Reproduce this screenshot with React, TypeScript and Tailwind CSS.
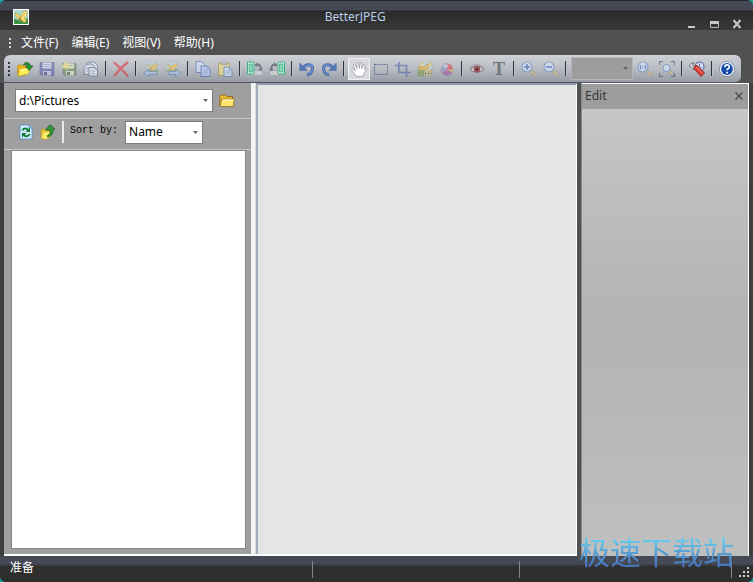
import { useState } from 'react';
import type { ReactNode } from 'react';

const MENUS = ['文件(F)', '编辑(E)', '视图(V)', '帮助(H)'];

interface IconProps {
  children: ReactNode;
  faded?: boolean;
}

function Icon({ children, faded }: IconProps) {
  return (
    <svg
      viewBox="0 0 16 16"
      className={`h-4 w-4 ${faded ? 'opacity-60' : ''}`}
      fill="none"
      aria-hidden="true"
    >
      {children}
    </svg>
  );
}

function OpenIcon() {
  return (
    <Icon>
      <path d="M.5 5l1-1h4l1 1h4v8l-8 2-2-1z" fill="#e4b41c" stroke="#a57b10" strokeWidth=".5" />
      <path d="M.8 15L3 7.500l11-1L11 13z" fill="#ffee58" stroke="#c9a020" strokeWidth=".6" />
      <path d="M3.500 9l9-1" stroke="#fffbb0" />
      <path d="M6.500 4C7 .5 13 .5 13.500 5H16l-4 4.500L8.500 5H11c-.5-1.800-2.500-2-4.500-1z" fill="#249a2d" stroke="#12551a" strokeWidth=".6" />
    </Icon>
  );
}

function SaveIcon() {
  return (
    <Icon faded>
      <path d="M1 1.500h14v13H2.500L1 13z" fill="#5f62ae" stroke="#4a4c91" strokeWidth=".7" />
      <path d="M3.500 1.500h9v6h-9z" fill="#e3e6f6" />
      <path d="M4.500 3.500h7M4.500 5.500h7" stroke="#9ba2cf" />
      <path d="M4 10h8v4.500H4z" fill="#c9cce3" />
      <path d="M5 11h3v3H5z" fill="#43457f" />
    </Icon>
  );
}

function SaveAsIcon() {
  return (
    <Icon faded>
      <path d="M2 2.500h13v12H3.500L2 13z" fill="#6e8f58" stroke="#557248" strokeWidth=".7" />
      <path d="M5 2.500h8v5H5z" fill="#e6edcf" />
      <path d="M7 4.500h5" stroke="#a5b28f" />
      <path d="M5 10h8v4.500H5z" fill="#dce4d8" />
      <path d="M6 11h3v3H6z" fill="#52654c" />
      <path d="M0 4.500l3-1L3.500.5l2 2 3-1.500L7.500 4l2 2-3 .5L5.500 9.500 4 7 1 8l1-2z" fill="#f5e87a" />
    </Icon>
  );
}

function BatchIcon() {
  return (
    <Icon faded>
      <path d="M3.500 3L5.500 1H11l3.500 3.500V12" fill="#edf1fc" stroke="#5a6c98" />
      <path d="M1 6.500L4 3h5l3 3v7.500H1z" fill="#e4eafa" stroke="#5a6c98" />
      <path d="M6 6.500h5l3.500 3v5.500H6z" fill="#f2f5ff" stroke="#5a6c98" />
      <path d="M8 10h4M8 12.500h4M3 7.500h2M3 10h2" stroke="#7f8eb3" strokeWidth=".8" />
    </Icon>
  );
}

function DeleteIcon() {
  return (
    <Icon faded>
      <path d="M1.500 1.800C6 5.500 10.500 10 14.500 14.800M14.500 1.500C9 5.500 5 10 1.500 14.500" stroke="#e63238" strokeWidth="2.200" strokeLinecap="round" />
    </Icon>
  );
}

function PhotoIcon({ forward }: { forward?: boolean }) {
  return (
    <Icon faded>
      <g transform={forward ? 'translate(-2 0)' : undefined}>
        <path d="M3 1h12v10H3z" fill="#bcdbe8" stroke="#9fb0b4" strokeWidth=".5" />
        <path d="M3 11V8.500l4-1 3 1 5-1.500v4z" fill="#8cb07c" />
        <path
          d="M9 7.500C6.500 7 4.500 5.500 4.500 3.500 7 3.500 8.500 5 9 6c.5-2 2.500-3.500 5-3.500.5 2.500-.5 4-2.500 4.800l1 2-2 .7-1.300-1.500L6.500 10 5 8.500z"
          fill="#f2cb50"
          stroke="#a07c34"
          strokeWidth=".5"
        />
      </g>
      {forward ? (
        <path d="M4 10.500h6.500V8.200L16 12l-5.500 3.800v-2.300H4z" fill="#a9c4f0" stroke="#4a72ad" strokeWidth=".8" />
      ) : (
        <path d="M14 10.500H6V8.200L.5 12 6 15.800v-2.300h8z" fill="#a9c4f0" stroke="#4a72ad" strokeWidth=".8" />
      )}
    </Icon>
  );
}

function CopyIcon() {
  return (
    <Icon faded>
      <path d="M1 .5h5.500l3 3v8H1z" fill="#d9e7ff" stroke="#4d72b7" />
      <path d="M6 5h6l3 3v7.500H6z" fill="#bdd2ff" stroke="#3f66b2" />
      <path d="M12 5v3h3M8 9h5M8 11h5M8 13h4" stroke="#6c8fcf" strokeWidth=".7" />
    </Icon>
  );
}

function PasteIcon() {
  return (
    <Icon faded>
      <path d="M1.500 2h11v12.500h-11z" fill="#f3e27c" stroke="#a8903c" />
      <path d="M4 3.500V2h2L7 .5l1 1.500h2v1.500z" fill="#c8cbd3" stroke="#777f92" strokeWidth=".7" />
      <path d="M7 6h5l3 3v6.500H7z" fill="#d9e5ff" stroke="#4e71b1" strokeWidth=".9" />
      <path d="M12 6v3h3M9 10h4M9 12h4" stroke="#6988bf" strokeWidth=".7" />
    </Icon>
  );
}

function RotateIcon({ flip }: { flip?: boolean }) {
  return (
    <Icon>
      <g transform={flip ? 'translate(16 0) scale(-1 1)' : undefined}>
        <path d="M5.500 9.500h10v5h-10z" fill="#c9ccd1" stroke="#a2a7af" />
        <path d="M.5 1h6.500v12H.5z" fill="#d7f6e7" stroke="#3fae80" />
        <path d="M2 3h3.500v8H2z" fill="#84d8b8" stroke="#39976f" strokeWidth=".6" />
        <path d="M8.500 4.200c3.500-1.700 5.300.3 5.300 4" stroke="#737a87" strokeWidth="2" />
        <path d="M11.300 7.500H16l-2.200 3zM7.500 4.500l3-3.500v5z" fill="#737a87" />
      </g>
    </Icon>
  );
}

function UndoIcon({ flip }: { flip?: boolean }) {
  return (
    <Icon>
      <g transform={flip ? 'translate(16 0) scale(-1 1)' : undefined}>
        <path d="M4 7C7 2.500 13.500 2.500 13.500 7.500c0 3.500-2 5.500-5.500 6.500" stroke="#4569a6" strokeWidth="3" />
        <path d="M4.500 6.500C8 3 13.500 3 13.500 7.500c0 3-2 5-5 6" stroke="#6e93cf" strokeWidth="1.300" />
        <path d="M.7 2V9.500h7.500z" fill="#5379b8" stroke="#4569a6" strokeWidth=".5" />
      </g>
    </Icon>
  );
}

function HandIcon() {
  return (
    <Icon>
      <path
        d="M5.200 15.300C3.500 13 2 10.500.8 9.300c-.7-1 .8-1.900 1.700-1.100L4.300 10 2.500 4c-.3-1.300 1.200-1.700 1.700-.4L6 7.500 5.700 2c0-1.300 1.600-1.300 1.800 0l.8 5.300L9.200 2c.2-1.200 1.900-1 1.800.3l-.4 5.400L12.400 4c.5-1.200 1.900-.6 1.600.6l-.4 3.600 1.200-.7c1-.3 1.300.6.6 1.300l-2.200 3-1.300 3.500z"
        fill="#fff"
        stroke="#8a8e97"
        strokeWidth=".7"
      />
    </Icon>
  );
}

function SelectionIcon() {
  return (
    <Icon>
      <path d="M1.500 3.500h13v10h-13z" stroke="#5b7099" strokeDasharray="2 1" />
    </Icon>
  );
}

function CropIcon() {
  return (
    <Icon faded>
      <path d="M4 1v10.500h12M0 4.500h11.500V16" stroke="#4d66a8" strokeWidth="1.700" />
      <path d="M4.500 11L14 1.500" stroke="#8b9ec8" strokeWidth=".7" />
    </Icon>
  );
}

function EffectsIcon() {
  return (
    <Icon faded>
      <path d="M5 1h10v14H1V6z" fill="#e9dfa0" stroke="#b0a26a" strokeWidth=".6" />
      <path d="M7 1.500h7.500V8H7z" fill="#b7d6e6" />
      <path d="M1 9.500h6V15H1z" fill="#82ab62" stroke="#56773d" strokeWidth=".6" />
      <path d="M1 6.500c2-1.500 4-1.500 6 0l3-3.500 2 1-1.500 4.500L7 9.500 1.500 8.500z" fill="#f0b93e" stroke="#a47a2a" strokeWidth=".6" />
      <path d="M8.500 10v5M11.500 9v6M14 8v7M8 12.500h7M2 12h4" stroke="#87794a" strokeWidth=".9" />
      <path d="M10 5l3.500-3.500L15 3l-3.500 4z" fill="#eee25c" stroke="#9b7330" strokeWidth=".4" />
    </Icon>
  );
}

function ColorIcon() {
  return (
    <Icon faded>
      <circle cx="8" cy="8.500" r="6" fill="#d9bd54" />
      <path d="M8 8.500V2.500a6 6 0 00-5.300 9z" fill="#8195d2" />
      <path d="M8 8.500V2.500a6 6 0 016 6z" fill="#e0444a" />
      <path d="M2.700 11.500a6 6 0 0010.600 0L8 8.500z" fill="#a8559f" />
      <ellipse cx="6.500" cy="5" rx="3" ry="1.700" fill="#fff" opacity=".5" />
      <circle cx="8" cy="8.500" r="6" stroke="#8f748f" strokeWidth=".5" />
    </Icon>
  );
}

function EyeIcon() {
  return (
    <Icon>
      <path d="M.8 8.500Q8 2 15.200 8.500 8 14 .8 8.500z" fill="#dcd6d8" stroke="#76686e" strokeWidth=".9" />
      <circle cx="8" cy="8.200" r="3" fill="#b56466" stroke="#7c4347" strokeWidth=".8" />
      <circle cx="8" cy="8.200" r="1.200" fill="#33232a" />
      <path d="M1 6.500Q8 .8 15 6.500" stroke="#94848a" strokeWidth=".7" />
    </Icon>
  );
}

function TextIcon() {
  return <span className="font-['Liberation_Serif',serif] text-lg leading-4 font-bold text-[#70757b]">T</span>;
}

function ZoomIcon({ kind }: { kind: 'in' | 'out' | 'actual' | 'fit' }) {
  const fit = kind === 'fit';
  return (
    <Icon faded>
      <path d={fit ? 'M9.500 9.500l3.500 3.500' : 'M9.500 9.500L14 14'} stroke="#8d8067" strokeWidth="3" strokeLinecap="round" />
      <path d={fit ? 'M10 10l3 3' : 'M10.500 10.500L14 14'} stroke="#dcc884" strokeWidth="2" strokeLinecap="round" />
      <circle cx={fit ? 7.5 : 6} cy={fit ? 7 : 6} r={fit ? 3.5 : 5} fill="#d7e8ff" stroke="#6f8fc4" strokeWidth="1.200" />
      {kind === 'in' && <path d="M3 6h6M6 3v6" stroke="#3266b8" strokeWidth="1.500" />}
      {kind === 'out' && <path d="M3 6h6" stroke="#3266b8" strokeWidth="1.500" />}
      {kind === 'actual' && (
        <path d="M3.500 4v4M8.500 4v4M5.500 5h1M5.500 7h1" stroke="#3266b8" strokeWidth="1.200" />
      )}
      {fit && (
        <path d="M.5 4V.5H4M12 .5h3.500V4M.5 12v3.500H4M12 15.500h3.500V12" stroke="#46546d" strokeWidth="1.300" />
      )}
    </Icon>
  );
}

function ToolsIcon() {
  return (
    <Icon>
      <circle cx="10.500" cy="5.500" r="4.500" fill="#d5ddf0" stroke="#5b6fa3" strokeWidth="1.200" />
      <path d="M10.500 2.500v3l2 1.500" stroke="#596e97" />
      <path d="M.3 5.500C.5 3 3 1.500 5 2L3.500 3.800l1.200 1.700 2.300-.7c.5 2-1 3.700-3 3.700-.3-1.500-1.500-2.700-3.700-3z" fill="#e3e5ea" stroke="#4c5362" strokeWidth=".8" />
      <path d="M4.500 7l3-3 8 8-3.500 3.500z" fill="#df3e32" stroke="#8c1e19" strokeWidth=".8" />
      <path d="M7 6l6.500 6.500" stroke="#ff8779" strokeWidth="1" />
    </Icon>
  );
}

function HelpIcon() {
  return (
    <Icon>
      <circle cx="8" cy="8" r="7.600" fill="#f5f7fb" stroke="#6f7b96" strokeWidth=".7" />
      <circle cx="8" cy="8" r="5.900" fill="#174ba9" />
      <path d="M5.900 6.200c0-3 4.600-3 4.400-.2 0 1.500-2.200 1.700-2.200 3.200M8.100 10.700v1.700" stroke="#fff" strokeWidth="1.700" />
    </Icon>
  );
}

function AppLogo() {
  return (
    <svg viewBox="0 0 16 16" className="h-4 w-4 bg-white" aria-hidden="true">
      <path d="M1 1h14v14H1z" fill="#a5dccf" />
      <path d="M1 9.500l4 1.500 4 1 6-3v6H1z" fill="#3f9345" />
      <path
        d="M7.500 11C4.500 10 2 7 2 4c2.500 0 4.500 2 5.500 4.500C8 5.500 10 2 13.500 1.500c1 3 .5 6-2.500 8 2 .5 2.500 2 2 3.500-2.500.5-4.500-.5-5.500-2z"
        fill="#fae884"
        stroke="#a88430"
        strokeWidth=".6"
      />
      <path d="M3.500 5.500L7.500 10l4.500-6M8 10.500l3.500 1.500" fill="none" stroke="#e0a437" strokeWidth=".8" />
      <path d="M6 9l2.500 3" stroke="#6e5220" />
    </svg>
  );
}

function FolderIcon() {
  return (
    <Icon>
      <path d="M.8 3.500l1-1.500h4.500L8 3.500h5.500v9.500H.8z" fill="#e9bd38" stroke="#805d11" strokeWidth=".8" />
      <path d="M1 13.500L2.700 6h12.800L14 13.500z" fill="#fbe470" stroke="#98721c" strokeWidth=".8" />
      <path d="M3.500 7h11" stroke="#fff9c9" />
    </Icon>
  );
}

function RefreshIcon() {
  return (
    <Icon>
      <path d="M2 1h9l3 3v11H2z" fill="#d5ebfb" stroke="#4b8fc2" strokeWidth=".8" />
      <path d="M11 1v3h3" fill="#aad8f5" stroke="#4b8fc2" strokeWidth=".8" />
      <path d="M4.500 6.500c1-2.500 4.500-2.500 5.500-.5M11.500 10c-1 3-4.500 3-5.500 .8" stroke="#0f7a35" strokeWidth="2" />
      <path d="M7.500 8H12V3.500zM8.500 9H4v4.500z" fill="#0f7a35" />
    </Icon>
  );
}

function UpFolderIcon() {
  return (
    <Icon>
      <path d="M1 6l1-1h3l1 1h5v7l-6 2.500L1 14z" fill="#e7c238" stroke="#9c7922" strokeWidth=".5" />
      <path d="M1 14.500L3 8l10-1-3 6-4 2.500z" fill="#fbec69" stroke="#b8942b" strokeWidth=".5" />
      <path d="M7.500 11.500c2.500-1 3-3 2.500-5.500H5.500L10 .8 15 5h-2c.8 4-1.500 7-5.500 8z" fill="#329736" stroke="#145820" strokeWidth=".7" />
    </Icon>
  );
}

function Grip() {
  return (
    <span className="flex w-[10px] shrink-0 flex-col items-center gap-[2px]" aria-hidden="true">
      <i className="h-[2px] w-[2px] bg-[#303238]" />
      <i className="h-[2px] w-[2px] bg-[#303238]" />
      <i className="h-[2px] w-[2px] bg-[#303238]" />
      <i className="h-[2px] w-[2px] bg-[#303238]" />
    </span>
  );
}

function Separator() {
  return (
    <span className="flex w-2 shrink-0 justify-center">
      <span className="h-[15px] w-[2px] border-r border-white/70 bg-[#30343c]" />
    </span>
  );
}

interface ToolButtonProps {
  label: string;
  children: ReactNode;
  active?: boolean;
}

function ToolButton({ label, children, active }: ToolButtonProps) {
  return (
    <button
      type="button"
      title={label}
      aria-label={label}
      className={`flex h-[22px] w-[22px] shrink-0 items-center justify-center border ${
        active ? 'border-[#eef0f3] bg-[#d7d9dd]' : 'border-transparent'
      }`}
    >
      {children}
    </button>
  );
}

function Arrow() {
  return (
    <svg
      viewBox="0 0 5 3"
      className="pointer-events-none absolute inset-y-0 right-[5px] my-auto h-[3px] w-[5px]"
      aria-hidden="true"
    >
      <path d="M0 0h5L2.500 3z" fill="#60656c" />
    </svg>
  );
}

function TitleBar() {
  return (
    <header className="flex h-[30px] shrink-0 items-start border-t border-[#25272d] bg-linear-to-b from-[#454855] from-30% via-[#2b2b2b] via-35% to-[#383838] pr-[11px] pl-[13px] text-[#b9cce8]">
      <div className="flex flex-[7] pt-2">
        <AppLogo />
      </div>
      <h1 className="pt-2 text-xs leading-4">BetterJPEG</h1>
      <div className="flex flex-[8] justify-end gap-[13px] pt-[18px]">
        <button type="button" aria-label="Minimize" className="h-[10px] w-[10px]">
          <svg viewBox="0 0 10 10" className="h-[10px] w-[10px]">
            <path d="M2 7h7v2H2z" fill="#c6c7c9" />
          </svg>
        </button>
        <button type="button" aria-label="Maximize" className="h-[10px] w-[10px]">
          <svg viewBox="0 0 10 10" className="h-[10px] w-[10px]">
            <path d="M1.500 2.500h8v6h-8z" fill="none" stroke="#b5b7ba" />
            <path d="M1 2h9v3H1z" fill="#c6c7c9" />
          </svg>
        </button>
        <button type="button" aria-label="Close" className="h-[10px] w-[10px]">
          <svg viewBox="0 0 10 10" className="h-[10px] w-[10px]">
            <path d="M1.500 1l7 8M8.500 1l-7 8" stroke="#c6c7c9" strokeWidth="2" />
          </svg>
        </button>
      </div>
    </header>
  );
}

function MenuBar() {
  return (
    <nav className="flex h-[25px] shrink-0 items-center bg-[#515151] pl-[9px] text-xs leading-4 text-white">
      <span className="mr-[10px] flex w-[2px] flex-col gap-[2px]" aria-hidden="true">
        <i className="h-[2px] w-[2px] bg-[#d4d4d4]" />
        <i className="h-[2px] w-[2px] bg-[#d4d4d4]" />
        <i className="h-[2px] w-[2px] bg-[#d4d4d4]" />
      </span>
      <div className="flex gap-[13px]">
        {MENUS.map((menu) => (
          <button key={menu} type="button">
            {menu}
          </button>
        ))}
      </div>
    </nav>
  );
}

function Toolbar() {
  return (
    <div className="mr-[12px] ml-1 flex h-[28px] shrink-0 items-center rounded-tl-md rounded-r-md border-b border-[#505660] bg-linear-to-b from-[#cfd1d6] via-[#b9bcc3] to-[#969ba5]">
      <Grip />
      <ToolButton label="Open"><OpenIcon /></ToolButton>
      <ToolButton label="Save"><SaveIcon /></ToolButton>
      <ToolButton label="Save as"><SaveAsIcon /></ToolButton>
      <ToolButton label="Batch"><BatchIcon /></ToolButton>
      <Separator />
      <ToolButton label="Delete"><DeleteIcon /></ToolButton>
      <Separator />
      <ToolButton label="Previous image"><PhotoIcon /></ToolButton>
      <ToolButton label="Next image"><PhotoIcon forward /></ToolButton>
      <Separator />
      <ToolButton label="Copy"><CopyIcon /></ToolButton>
      <ToolButton label="Paste"><PasteIcon /></ToolButton>
      <Separator />
      <ToolButton label="Rotate right"><RotateIcon /></ToolButton>
      <ToolButton label="Rotate left"><RotateIcon flip /></ToolButton>
      <Separator />
      <ToolButton label="Undo"><UndoIcon /></ToolButton>
      <ToolButton label="Redo"><UndoIcon flip /></ToolButton>
      <Separator />
      <ToolButton label="Pan" active><HandIcon /></ToolButton>
      <ToolButton label="Select"><SelectionIcon /></ToolButton>
      <ToolButton label="Crop"><CropIcon /></ToolButton>
      <ToolButton label="Effects"><EffectsIcon /></ToolButton>
      <ToolButton label="Color"><ColorIcon /></ToolButton>
      <Separator />
      <ToolButton label="Red eye"><EyeIcon /></ToolButton>
      <ToolButton label="Text"><TextIcon /></ToolButton>
      <Separator />
      <ToolButton label="Zoom in"><ZoomIcon kind="in" /></ToolButton>
      <ToolButton label="Zoom out"><ZoomIcon kind="out" /></ToolButton>
      <Separator />
      <div className="relative mx-[1px] shrink-0">
        <select
          aria-label="Zoom level"
          disabled
          className="block h-[23px] w-[62px] appearance-none border border-[#b5b6b8] bg-[#9c9d9c] opacity-100"
        />
        <Arrow />
      </div>
      <ToolButton label="Actual size"><ZoomIcon kind="actual" /></ToolButton>
      <ToolButton label="Fit to window"><ZoomIcon kind="fit" /></ToolButton>
      <Separator />
      <ToolButton label="Options"><ToolsIcon /></ToolButton>
      <Separator />
      <ToolButton label="Help"><HelpIcon /></ToolButton>
    </div>
  );
}

function FolderPanel() {
  const [folder, setFolder] = useState('d:\\Pictures');
  const [sort, setSort] = useState('Name');

  return (
    <aside className="flex w-[247px] shrink-0 flex-col bg-[#9f9f9f]">
      <div className="flex h-[36px] shrink-0 items-center border-b border-[#c5c5c5] pl-[11px]">
        <div className="relative">
          <select
            aria-label="Folder"
            value={folder}
            onChange={(e) => setFolder(e.target.value)}
            className="block h-[23px] w-[198px] appearance-none border border-[#7c7c7c] bg-white pl-[3px] text-xs leading-4 text-black"
          >
            <option>d:\Pictures</option>
          </select>
          <Arrow />
        </div>
        <button type="button" aria-label="Browse" className="ml-[6px]">
          <FolderIcon />
        </button>
      </div>
      <div className="flex h-[31px] shrink-0 items-center border-b border-[#c5c5c5] pl-[14px] pb-[4px]">
        <button type="button" aria-label="Refresh">
          <RefreshIcon />
        </button>
        <button type="button" aria-label="Up one level" className="ml-[6px]">
          <UpFolderIcon />
        </button>
        <span className="mx-[6px] h-[22px] w-[2px] bg-[#ececec]" />
        <label
          htmlFor="sort"
          className="mr-[7px] pb-[2px] font-['Liberation_Mono',monospace] text-[10px] leading-4 text-black"
        >
          Sort by:
        </label>
        <div className="relative">
          <select
            id="sort"
            value={sort}
            onChange={(e) => setSort(e.target.value)}
            className="block h-[23px] w-[78px] appearance-none border border-[#7c7c7c] bg-white pl-[3px] text-xs leading-4 text-black"
          >
            <option>Name</option>
          </select>
          <Arrow />
        </div>
      </div>
      <div className="mr-[5px] mb-[5px] ml-[7px] flex-1 border border-[#858585] bg-white" />
    </aside>
  );
}

function EditPanel() {
  return (
    <aside className="w-[168px] shrink-0 border-t border-r border-l border-white border-l-[#888] bg-linear-to-b from-[#c8c8c8] via-[#b3b3b3] to-[#bfbfbf]">
      <div className="flex h-[25px] items-center justify-between bg-[#9c9d9c] pr-1 pb-[2px] pl-[3px] text-xs leading-4 text-[#34373b]">
        <h2>Edit</h2>
        <button type="button" aria-label="Close panel">
          <svg viewBox="0 0 10 10" className="h-[10px] w-[10px]">
            <path d="M1.500 1.500l7 7M8.500 1.500l-7 7" stroke="#45474a" strokeWidth="1.200" />
          </svg>
        </button>
      </div>
    </aside>
  );
}

function StatusBar() {
  return (
    <footer className="flex h-[26px] shrink-0 items-center justify-between bg-linear-to-b from-[#454855] from-30% via-[#30302f] via-40% to-[#2d2d2d] pl-[10px] text-xs leading-4 text-white">
      <span className="flex-[303] pb-[2px]">准备</span>
      <span className="h-[17px] flex-[206] border-l border-[#85878b]" />
      <span className="h-[17px] flex-[212] border-l border-[#85878b]" />
      <span className="flex h-[17px] w-[22px] items-end border-l border-[#85878b] pl-[6px]">
        <svg viewBox="0 0 12 12" className="h-3 w-3" aria-hidden="true">
          <path d="M9 1h2v2H9zM5 5h2v2H5zM9 5h2v2H9zM1 9h2v2H1zM5 9h2v2H5zM9 9h2v2H9z" fill="#d0d1d3" />
        </svg>
      </span>
    </footer>
  );
}

export default function App() {
  return (
    <div className="h-screen bg-[#12a4a0] font-['Noto_Sans','Noto_Sans_CJK_SC',sans-serif]">
      <div className="relative flex h-full flex-col overflow-hidden rounded-md bg-[#515151]">
        <TitleBar />
        <MenuBar />
        <Toolbar />
        <main className="flex min-h-0 flex-1 border-r-4 border-l-4 border-[#3d3e40]">
          <div className="flex min-w-0 flex-1 border-b-2 border-white">
            <FolderPanel />
            <div className="w-[5px] shrink-0 border-l-4 border-[#f5f5f5] bg-[#dcdde0]" />
            <section className="min-w-0 flex-1 border-t-2 border-r border-l-2 border-[#8f99a9] border-r-white border-l-[#a3acb9] bg-[#e5e5e5]" />
          </div>
          <div className="w-1 shrink-0 bg-[#505152]" />
          <EditPanel />
        </main>
        <StatusBar />
        <p className="pointer-events-none absolute right-[19px] bottom-[13px] bg-linear-to-b from-[#65c9ed] from-20% to-[#4774ba] to-90% bg-clip-text font-['Noto_Sans_CJK_SC',sans-serif] text-[31px] leading-9 text-transparent">
          极速下载站
        </p>
      </div>
    </div>
  );
}
